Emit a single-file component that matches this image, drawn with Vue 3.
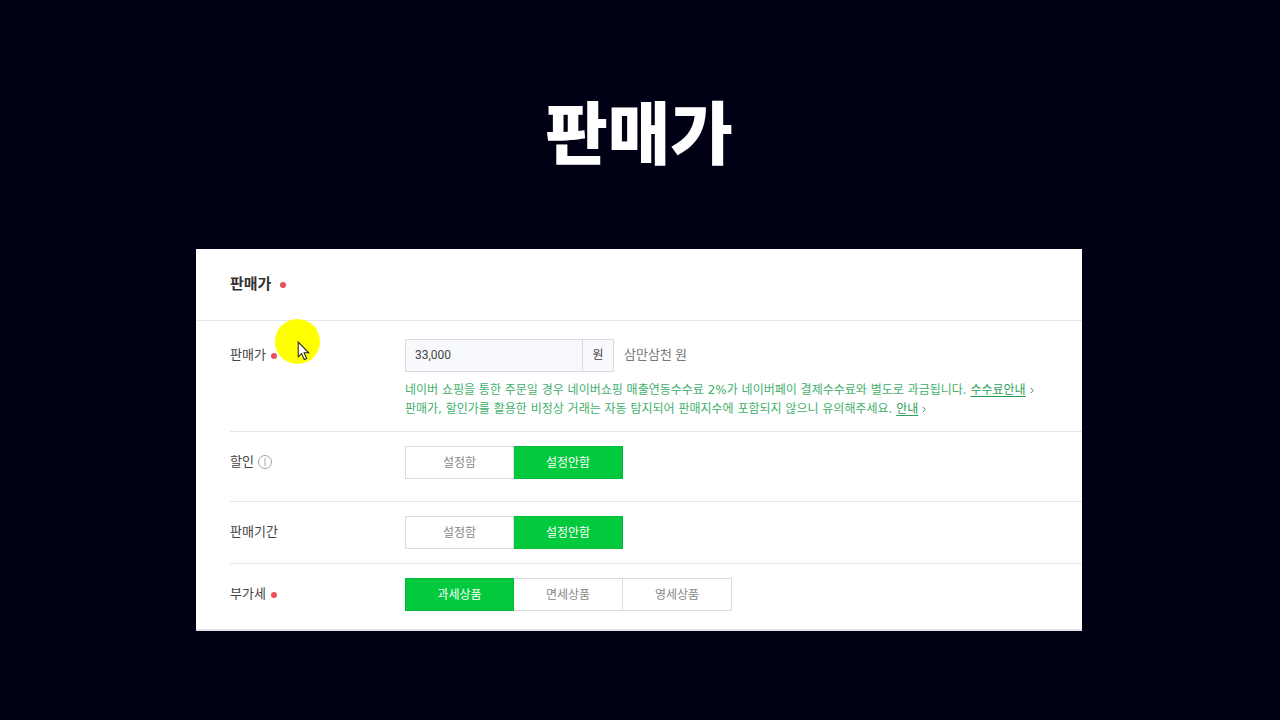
<script setup>
import { reactive, ref } from 'vue'

const price = ref('33,000')

const groups = reactive([
  { id: 'discount', label: '할인', info: true, options: ['설정함', '설정안함'], value: '설정안함' },
  { id: 'period', label: '판매기간', options: ['설정함', '설정안함'], value: '설정안함' },
  { id: 'vat', label: '부가세', required: true, options: ['과세상품', '면세상품', '영세상품'], value: '과세상품' },
])
</script>

<template>
  <main class="page">
    <h1 class="title">판매가</h1>

    <section class="card">
      <h2 class="card-head">판매가<i class="dot"></i></h2>

      <div class="row price">
        <label class="label" for="price">판매가<i class="dot"></i></label>
        <div class="content">
          <div class="price-line">
            <div class="field">
              <input id="price" v-model="price" type="text" />
              <span class="unit">원</span>
            </div>
            <span class="reading">삼만삼천 원</span>
          </div>
          <p class="help">
            네이버 쇼핑을 통한 주문일 경우 네이버쇼핑 매출연동수수료 2%가 네이버페이 결제수수료와 별도로 과금됩니다.
            <a href="#">수수료안내</a>
            <svg class="chevron" viewBox="0 0 4 7"><path d="M.8 .8 3.2 3.5 .8 6.2" /></svg>
            <br />
            판매가, 할인가를 활용한 비정상 거래는 자동 탐지되어 판매지수에 포함되지 않으니 유의해주세요.
            <a href="#">안내</a>
            <svg class="chevron" viewBox="0 0 4 7"><path d="M.8 .8 3.2 3.5 .8 6.2" /></svg>
          </p>
        </div>
        <div class="pointer">
          <svg viewBox="0 0 12 19">
            <path d="M1 1V15L4.2 12L6.7 17.6L9 16.6L6.6 11.2H11Z" />
          </svg>
        </div>
      </div>

      <div v-for="g in groups" :key="g.id" class="row" :class="g.id">
        <span :id="g.id" class="label">
          {{ g.label }}<i v-if="g.required" class="dot"></i>
          <svg v-if="g.info" class="info" viewBox="0 0 16 16">
            <circle cx="8" cy="8" r="6.5" />
            <path d="M8 4V12" />
          </svg>
        </span>
        <div class="segments" role="group" :aria-labelledby="g.id">
          <button
            v-for="o in g.options"
            :key="o"
            type="button"
            :class="{ on: g.value === o }"
            :aria-pressed="g.value === o"
            @click="g.value = o"
          >
            {{ o }}
          </button>
        </div>
      </div>
    </section>
  </main>
</template>

<style>
body {
  background: #000014;
}
</style>

<style scoped>
.page {
  box-sizing: border-box;
  min-height: 100vh;
  padding: 86px 198px 88px 196px;
  background: #000014;
  color: #444;
  font-family: Roboto, "Noto Sans CJK KR", sans-serif;
  font-size: 12px;
}
.title {
  margin: 0 0 63px;
  color: #fff;
  font-size: 68px;
  font-weight: 900;
  line-height: 100px;
  text-align: center;
}
.card {
  box-sizing: border-box;
  background: #fff;
  border-bottom: 2px solid #e2e2ec;
}
.card-head {
  box-sizing: border-box;
  display: flex;
  align-items: center;
  height: 72px;
  margin: 0;
  padding: 0 0 4px 34px;
  border-bottom: 1px solid #e6e6e8;
  color: #333;
  font-size: 15px;
  font-weight: 700;
}
.dot {
  flex: none;
  width: 6px;
  height: 6px;
  margin: 4px 0 0 5px;
  border-radius: 50%;
  background: #e8505f;
}
.card-head .dot {
  margin-left: 9px;
}
.row {
  position: relative;
  display: flex;
  align-items: flex-start;
  margin-left: 34px;
  padding: 14px 0;
  border-bottom: 1px solid #e6e6e8;
}
.row.price {
  padding: 18px 0 12px;
}
.row.discount {
  padding-bottom: 22px;
}
.row.vat {
  padding-bottom: 18px;
  border-bottom: 0;
}
.label {
  display: flex;
  flex: none;
  align-items: center;
  width: 175px;
  height: 28px;
  font-size: 13px;
}
.label .dot {
  margin-top: 6px;
}
.info {
  width: 16px;
  height: 16px;
  margin: 4px 0 0 3px;
  fill: none;
  stroke: #a8a0a6;
}
.price-line {
  display: flex;
  align-items: center;
  gap: 10px;
}
.field {
  box-sizing: border-box;
  display: flex;
  width: 209px;
  height: 33px;
  border: 1px solid #d8dae0;
  background: #f8f9fd;
}
.field input {
  flex: 1;
  min-width: 0;
  padding: 0 9px 2px;
  border: 0;
  outline: 0;
  background: transparent;
  color: #444;
  font: inherit;
}
.unit {
  width: 30px;
  border-left: 1px solid #d8dae0;
  line-height: 31px;
  text-align: center;
}
.reading {
  padding-bottom: 4px;
  color: #777;
  font-size: 13px;
}
.help {
  margin: 9px 0 0;
  color: #3fb06c;
  font-family: "DejaVu Sans", "Noto Sans CJK KR", sans-serif;
  line-height: 19px;
}
.help a {
  color: #2c9f5a;
  text-underline-offset: 2px;
}
.chevron {
  width: 4px;
  height: 7px;
  margin-left: 4px;
  fill: none;
  stroke: #3f8f60;
}
.segments {
  display: flex;
}
.segments button {
  width: 109px;
  height: 33px;
  padding: 0 0 2px;
  border: 1px solid #dcdcdf;
  border-left-width: 0;
  background: #fff;
  color: #888;
  font: inherit;
}
.segments button:first-child {
  border-left-width: 1px;
}
.segments .on {
  border-color: #05b93a;
  background: #03c93c;
  color: #fff;
}
.pointer {
  position: absolute;
  top: -2px;
  left: 45px;
  width: 45px;
  height: 45px;
  border-radius: 50%;
  background: #ff0;
}
.pointer svg {
  position: absolute;
  top: 22px;
  left: 22px;
  width: 13px;
  height: 20px;
  fill: #fff;
  stroke: #222;
}
</style>
